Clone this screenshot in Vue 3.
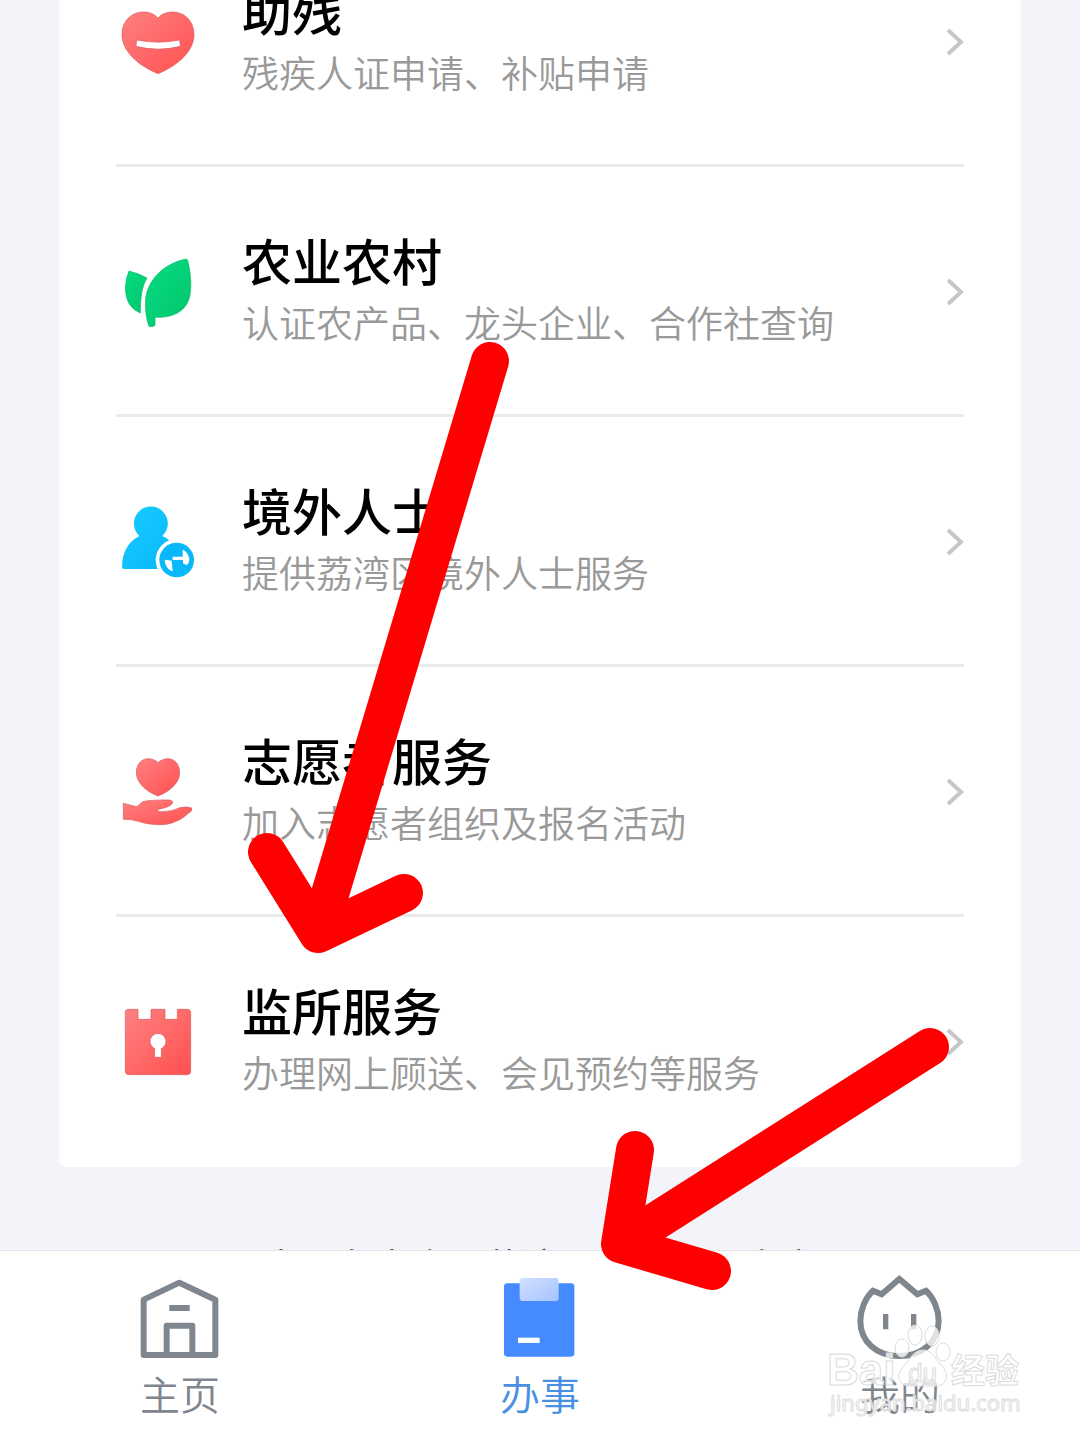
<template>
  <div class="page">
    <main class="content">
      <ul class="card">
        <li v-for="item in services" :key="item.title">
          <a class="service" href="#">
            <svg v-if="item.icon === 'heart'" class="service-icon" viewBox="48 0 252 252" aria-hidden="true">
              <defs>
                <linearGradient id="red" x1="0" y1="0" x2="1" y2="1">
                  <stop offset="0" stop-color="#ff8080" />
                  <stop offset="1" stop-color="#ff5050" />
                </linearGradient>
              </defs>
              <path
                class="red-shape"
                d="M174 54C187 40 202 36 218 36C255 36 282 64 282 104C282 150 240 193 174 221C108 193 66 150 66 104C66 64 93 36 130 36C146 36 161 40 174 54Z"
              />
              <path class="hole edged" d="M110 120Q174 133 239 120L241 139Q174 156 108 139Z" />
            </svg>

            <svg v-else-if="item.icon === 'leaf'" class="service-icon" viewBox="48 60 252 252" aria-hidden="true">
              <defs>
                <linearGradient id="green" x1="0" y1="0" x2="1" y2="1">
                  <stop offset="0" stop-color="#05dc82" />
                  <stop offset="1" stop-color="#03c56c" />
                </linearGradient>
              </defs>
              <path class="green-shape" d="M87 123Q116 130 141 144Q120 176 121 249Q77 232 76 175Q77 145 87 123Z" />
              <path
                class="green-shape"
                d="M258 87Q264 87 265 100C272 130 275 168 270 195C262 240 225 264 165 262V286Q157 293 147 289C138 265 135 235 137 205C145 145 195 100 258 87Z"
              />
            </svg>

            <svg v-else-if="item.icon === 'visitor'" class="service-icon" viewBox="48 60 252 252" aria-hidden="true">
              <defs>
                <linearGradient id="blue" x1="0" y1="0" x2="1" y2="1">
                  <stop offset="0" stop-color="#19ccff" />
                  <stop offset="1" stop-color="#06b6fa" />
                </linearGradient>
              </defs>
              <path
                fill="url(#blue)"
                d="M118 168A51 51 0 1 1 187 168C220 180 240 220 240 267H73Q66 267 66 260C67 215 86 184 118 168Z"
              />
              <circle cx="230" cy="240" r="63" fill="#fff" />
              <circle cx="230" cy="240" r="52" fill="#08b8fb" />
              <path class="hole" d="M194 239L215 242L218 274C204 270 195 256 194 239Z" />
              <path class="hole" d="M218 230H248V209C261 214 268 228 268 240Q267 250 260 256L249 250V240H218Z" />
            </svg>

            <svg v-else-if="item.icon === 'volunteer'" class="service-icon" viewBox="48 60 252 252" aria-hidden="true">
              <path
                class="red-shape"
                d="M174 98C183 89 193 86 203 86C225 86 239 104 239 128C239 158 210 184 174 198C138 184 109 158 109 128C109 104 123 86 145 86C155 86 165 89 174 98Z"
              />
              <path
                class="red-shape"
                d="M70 220L110 230Q118 224 128 215Q150 209 210 210Q222 213 216 222Q207 232 175 238Q170 245 182 245Q214 246 240 233Q260 228 275 234Q279 242 265 250Q240 275 200 283Q150 287 115 274Q92 267 70 268Z"
              />
            </svg>

            <svg v-else class="service-icon" viewBox="48 60 252 252" aria-hidden="true">
              <path
                class="red-shape"
                d="M85 88H114V118H153V88H195V118H232V88H263Q272 88 272 97V274Q272 284 262 284H86Q76 284 76 274V97Q76 88 85 88Z"
              />
              <path class="hole edged" d="M164 206A24 24 0 1 1 184 206V232H164Z" />
            </svg>

            <span class="service-text">
              <span class="service-title">{{ item.title }}</span>
              <span class="service-desc">{{ item.desc }}</span>
            </span>

            <svg class="chevron" viewBox="0 0 18 28" aria-hidden="true">
              <path d="M2 2L15 14L2 26" />
            </svg>
          </a>
        </li>
      </ul>
      <p class="footnote">本服务由广州荔湾区政务中心官方</p>
    </main>

    <nav class="tabbar">
      <a class="tab" href="#">
        <svg class="tab-icon" viewBox="36 126 288 288" aria-hidden="true">
          <path class="line round" d="M71 209L178 158L286 209V375H71Z" />
          <path class="line round" d="M140 375V287H217V375" />
          <path class="line" d="M148 234H209" />
        </svg>
        <span>主页</span>
      </a>
      <a class="tab active" href="#" aria-current="page">
        <svg class="tab-icon" viewBox="36 126 288 288" aria-hidden="true">
          <defs>
            <linearGradient id="clip" x1="0" y1="0" x2="1" y2="1">
              <stop offset="0" stop-color="#d2e0ff" />
              <stop offset="1" stop-color="#a4c3ff" />
            </linearGradient>
          </defs>
          <rect x="72" y="160" width="211" height="220" rx="10" fill="#468aff" />
          <rect x="119" y="144" width="117" height="69" rx="10" fill="url(#clip)" />
          <rect x="114" y="323" width="65" height="16" fill="#fff" />
        </svg>
        <span>办事</span>
      </a>
      <a class="tab" href="#">
        <svg class="tab-icon" viewBox="156 126 288 288" aria-hidden="true">
          <path
            class="line"
            d="M298 147L245 193L219 182C195 205 181 240 181 272C181 335 230 378 298 378C366 378 416 335 416 272C416 240 402 205 378 182L352 193Z"
          />
          <path class="line eye" d="M257 252V298M341 252V298" />
        </svg>
        <span>我的</span>
      </a>
    </nav>

    <svg class="overlay" viewBox="0 0 1080 1440" aria-hidden="true">
      <path class="arrow" d="M490 361L318 934M267 852L318 934L404 893" />
      <path class="arrow" d="M930 1047L620 1244M635 1150L620 1244L712 1271" />
      <g class="watermark">
        <text class="brand" x="827" y="1385">Bai</text>
        <ellipse cx="915" cy="1335" rx="7" ry="10" />
        <ellipse cx="932" cy="1336" rx="7" ry="10" />
        <ellipse cx="902" cy="1348" rx="7" ry="9" />
        <ellipse cx="943" cy="1352" rx="7" ry="9" />
        <path d="M923 1350C933 1350 936 1360 941 1365C951 1375 946 1386 936 1386H910C898 1386 895 1374 904 1366C910 1360 913 1350 923 1350Z" />
        <text class="du" x="908" y="1382">du</text>
        <text class="brand-cn" x="951" y="1383">经验</text>
        <text class="url" x="830" y="1411">jingyan.baidu.com</text>
      </g>
    </svg>
  </div>
</template>

<script setup>
const services = [
  { icon: 'heart', title: '助残', desc: '残疾人证申请、补贴申请' },
  { icon: 'leaf', title: '农业农村', desc: '认证农产品、龙头企业、合作社查询' },
  { icon: 'visitor', title: '境外人士', desc: '提供荔湾区境外人士服务' },
  { icon: 'volunteer', title: '志愿者服务', desc: '加入志愿者组织及报名活动' },
  { icon: 'lock', title: '监所服务', desc: '办理网上顾送、会见预约等服务' },
]
</script>

<style>
body {
  background: #f3f4f9;
}
</style>

<style scoped>
.page {
  position: relative;
  display: flex;
  flex-direction: column;
  height: 100vh;
  overflow: hidden;
  background: #f3f4f9;
  font-family: 'Noto Sans CJK SC', sans-serif;
}

.content {
  flex: 1;
  min-height: 0;
  display: flex;
  flex-direction: column;
  justify-content: flex-end;
  overflow: hidden;
}

.card {
  flex-shrink: 0;
  margin: 0 59px;
  padding: 0 57px;
  list-style: none;
  background: #fff;
  border-radius: 8px;
}

.service {
  display: flex;
  align-items: center;
  height: 250px;
  color: #000;
  text-decoration: none;
}

.card li:not(:last-child) .service {
  box-shadow: inset 0 -3px #eaeaea;
}

.service-icon {
  width: 84px;
  height: 84px;
  margin-right: 42px;
}

.red-shape {
  fill: url(#red);
  stroke: #d9595c;
  stroke-width: 2;
}

.green-shape {
  fill: url(#green);
  stroke: #03bd68;
  stroke-width: 2;
}

.hole {
  fill: #fff;
}

.edged {
  stroke: #d9595c;
  stroke-width: 2;
}

.service-text {
  flex: 1;
  display: flex;
  flex-direction: column;
  padding-bottom: 4px;
}

.service-title {
  font-size: 50px;
  font-weight: 500;
  line-height: 64px;
}

.service-desc {
  font-size: 37px;
  font-weight: 350;
  line-height: 62px;
  color: #999;
}

.chevron {
  width: 18px;
  height: 28px;
  fill: none;
  stroke: #c7c7cb;
  stroke-width: 4;
}

/* only the tips of this line show above the tab bar */
.footnote {
  flex-shrink: 0;
  box-sizing: border-box;
  height: 83px;
  margin: 0;
  padding-top: 72px;
  font-size: 37px;
  line-height: 52px;
  text-align: center;
  white-space: nowrap;
  color: #555;
}

.tabbar {
  z-index: 1;
  flex-shrink: 0;
  box-sizing: border-box;
  height: 190px;
  display: flex;
  background: #fff;
  border-top: 1px solid #e4e5e8;
}

.tab {
  flex: 1;
  display: flex;
  flex-direction: column;
  align-items: center;
  padding-top: 21px;
  font-size: 40px;
  font-weight: 350;
  line-height: 50px;
  color: #7f868d;
  text-decoration: none;
}

.tab.active {
  color: #4a90e2;
}

.tab-icon {
  width: 96px;
  height: 96px;
}

.line {
  fill: none;
  stroke: #7f868d;
  stroke-width: 18;
}

.round {
  stroke-linejoin: round;
}

.eye {
  stroke-width: 16;
}

.overlay {
  position: absolute;
  inset: 0;
  z-index: 2;
  width: 100%;
  height: 100%;
  pointer-events: none;
}

.arrow {
  fill: none;
  stroke: #f00;
  stroke-width: 38;
  stroke-linecap: round;
  stroke-linejoin: round;
}

.watermark {
  fill: rgba(255, 255, 255, 0.75);
  stroke: #dcdcdc;
  stroke-width: 1;
  font-family: 'Liberation Sans', 'Noto Sans CJK SC', sans-serif;
}

.brand {
  font-size: 44px;
  font-weight: 700;
}

.brand-cn {
  font-size: 34px;
  font-weight: 700;
}

.du {
  font-size: 26px;
}

.url {
  font-family: 'Noto Sans', sans-serif;
  font-size: 22px;
}
</style>
